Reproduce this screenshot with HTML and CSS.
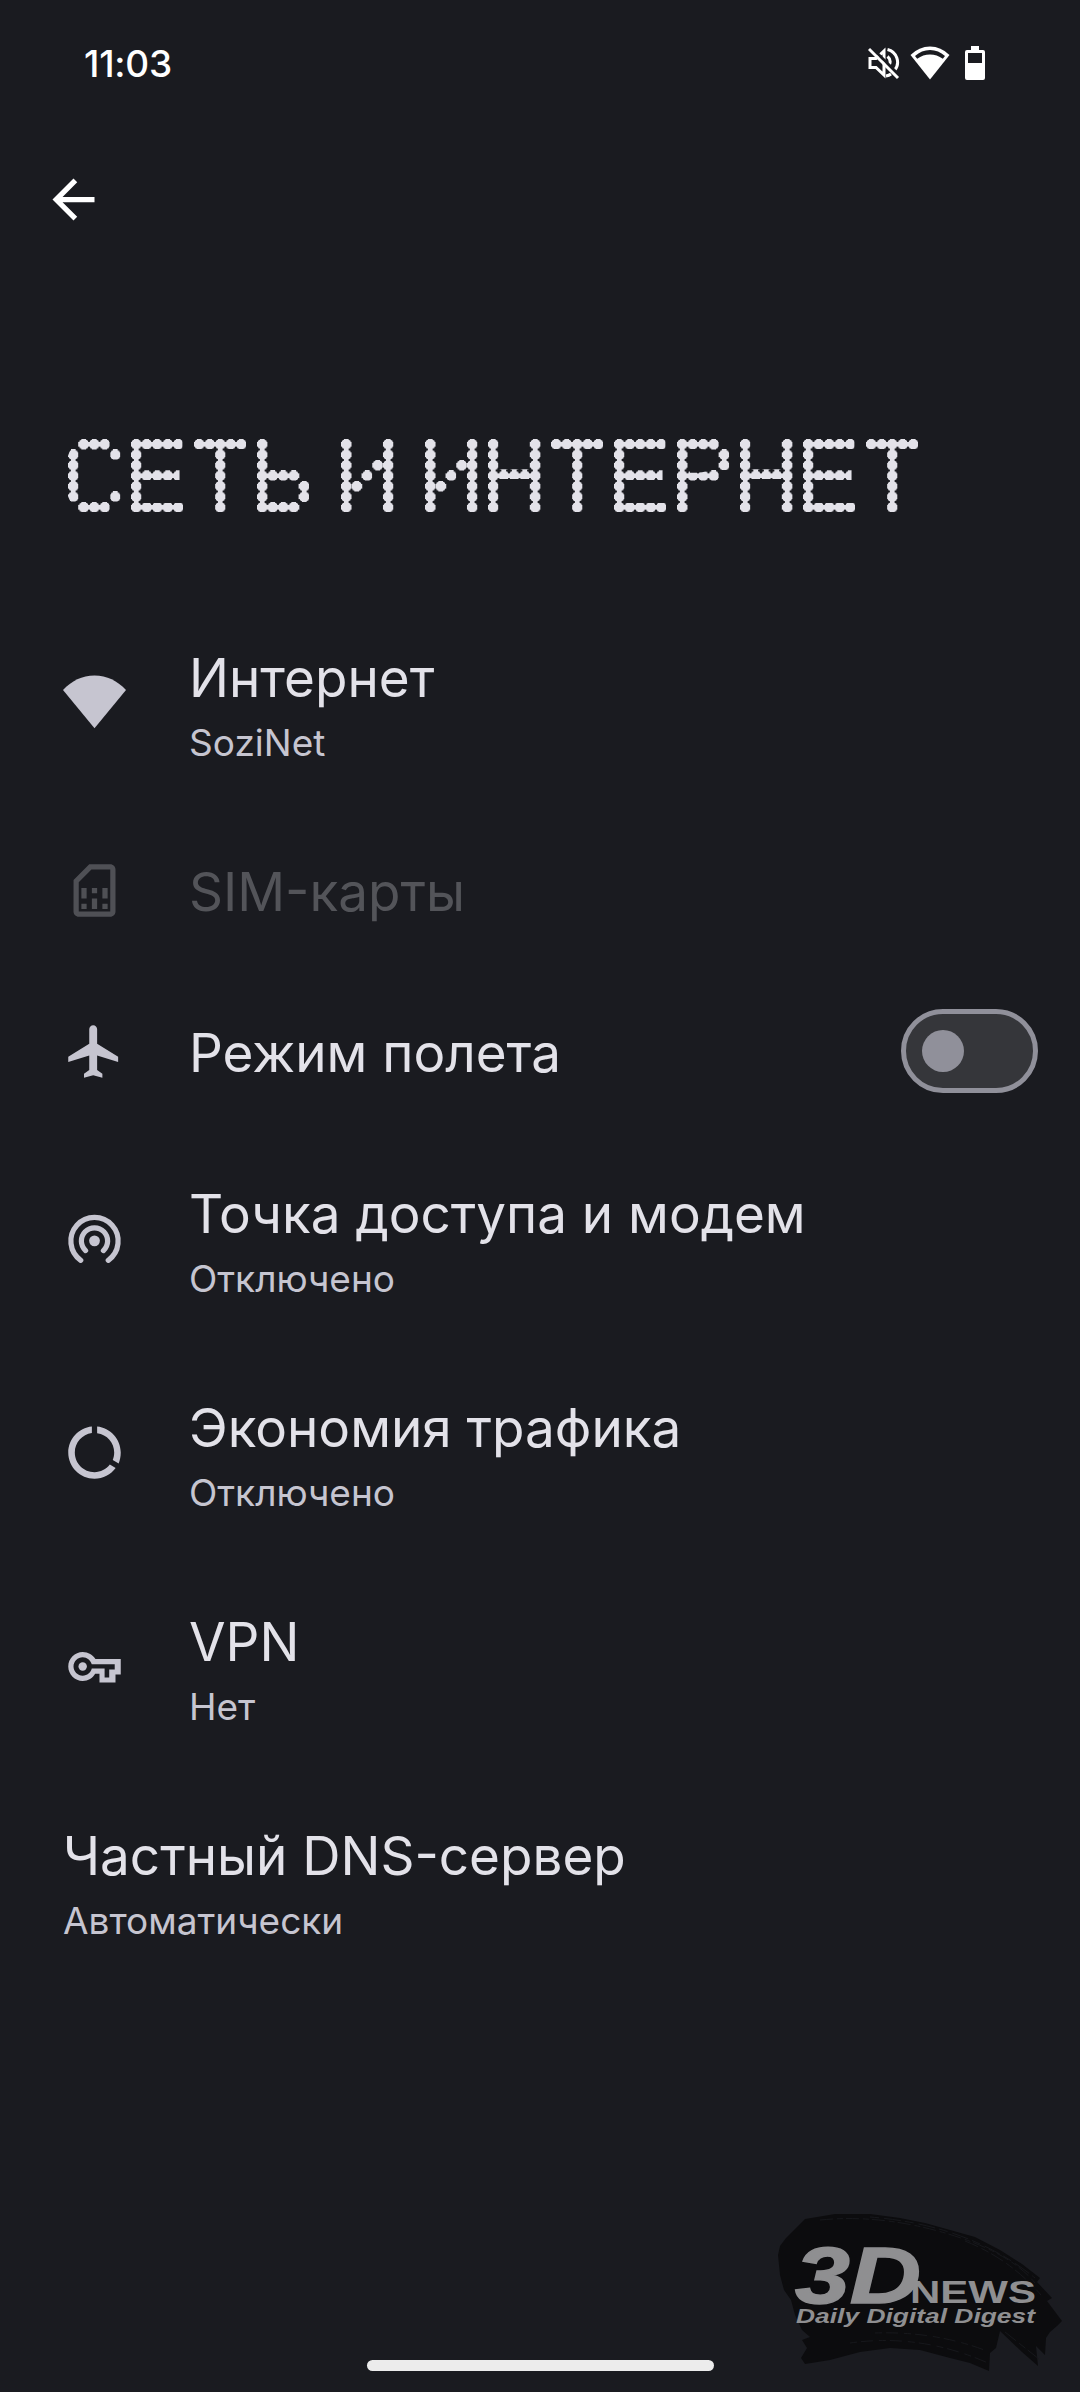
FILE: index.html
```html
<!DOCTYPE html>
<html lang="ru">
<head>
<meta charset="utf-8">
<title>Сеть и интернет</title>
<link rel="stylesheet" href="styles.css">
</head>
<body>
<header class="status-bar">
  <span class="clock">11:03</span>
  <div class="status-icons">
    <svg class="mute" width="32" height="34" viewBox="0 0 32 34" fill="none" stroke="#fff" stroke-width="3">
      <path d="M2 12.500h6l8-7.500v24l-8-7.500H2z"/>
      <path d="M19.500 3.500a13 13 0 0 1 7 21M19.500 10.500a7 7 0 0 1 2 8M18 30q3-.5 5-2"/>
      <path d="M3 1l29 29" stroke="#1a1b20" stroke-width="3"/>
      <path d="M1 3l29 29"/>
    </svg>
    <svg class="wifi" width="40" height="34" viewBox="0 0 40 34">
      <path fill="#fff" d="M20 33.500L.5 9Q9 .5 20 .5T39.500 9z"/>
      <path fill="#1a1b20" d="M5 10Q11.500 4 20 4t15 6l-2.200 2.800Q27 8.500 20 8.500T7.200 12.800z"/>
    </svg>
    <svg class="battery" width="20" height="34" viewBox="0 0 20 34">
      <path fill="#fff" fill-rule="evenodd" d="M6 0h8v4h4a2 2 0 0 1 2 2v26a2 2 0 0 1-2 2H2a2 2 0 0 1-2-2V6a2 2 0 0 1 2-2h4zM3 7v10h14V7z"/>
    </svg>
  </div>
</header>
<nav class="toolbar">
  <svg class="icon back" viewBox="0 0 24 24"><path d="M20 11H7.830l5.590-5.590L12 4l-8 8 8 8 1.410-1.410L7.830 13H20v-2z"/></svg>
</nav>
<h1 class="page-title">
  <span class="word"><span class="cell"><span class="dots es">С</span></span><span class="cell"><span class="dots ie">Е</span></span><span class="cell"><span class="dots te">Т</span></span><span class="cell"><span class="dots soft">Ь</span></span></span>
  <span class="word"><span class="cell"><span class="dots i">И</span></span></span>
  <span class="word"><span class="cell"><span class="dots i">И</span></span><span class="cell"><span class="dots en">Н</span></span><span class="cell"><span class="dots te">Т</span></span><span class="cell"><span class="dots ie">Е</span></span><span class="cell"><span class="dots er">Р</span></span><span class="cell"><span class="dots en">Н</span></span><span class="cell"><span class="dots ie">Е</span></span><span class="cell"><span class="dots te">Т</span></span></span>
</h1>
<main class="settings">
  <section class="row">
    <svg class="icon" viewBox="0 0 24 24"><path d="M12 21.800L0 7.200C3.200 3.800 7.300 1.700 12 1.700s8.800 2.100 12 5.500z"/></svg>
    <div class="label"><div class="name">Интернет</div><div class="summary">SoziNet</div></div>
  </section>
  <section class="row single disabled">
    <svg class="icon" viewBox="0 0 24 24"><path d="M18 2h-8L4.020 8 4 20c0 1.100.9 2 2 2h12c1.100 0 2-.9 2-2V4c0-1.100-.9-2-2-2zm0 18H6V8.830L10.830 4H18v16zM7 17h2v2H7zm8 0h2v2h-2zm-8-6h2v4H7zm4 4h2v4h-2zm0-4h2v2h-2zm4 0h2v4h-2z"/></svg>
    <div class="label"><div class="name">SIM-карты</div></div>
  </section>
  <section class="row single">
    <svg class="icon" viewBox="0 0 24 24"><path d="M21 16v-2l-8-5V3.500c0-.83-.67-1.500-1.500-1.500S10 2.670 10 3.500V9l-8 5v2l8-2.500V19l-2 1.500V22l3.500-1 3.500 1v-1.500L13 19v-5.500l8 2.500z"/></svg>
    <div class="label"><div class="name">Режим полета</div></div>
    <div class="switch"><span class="thumb"></span></div>
  </section>
  <section class="row">
    <svg class="icon line" viewBox="0 0 24 24"><circle class="dot" cx="12" cy="12.900" r="2.050"/><path d="M8.600 16.600a5 5 0 1 1 6.800 0M6.750 20.300a9 9 0 1 1 10.500 0"/></svg>
    <div class="label"><div class="name">Точка доступа и модем</div><div class="summary">Отключено</div></div>
  </section>
  <section class="row">
    <svg class="icon" viewBox="0 0 24 24"><path d="M13 2.050v2.600c3.800.49 6.500 3.600 6.500 7.350 0 1-.2 2-.55 2.900l2.250 1.300c.5-1.300.8-2.700.8-4.200 0-5.180-3.950-9.450-9-9.950zM12 19.500c-4.150 0-7.500-3.350-7.500-7.500 0-3.750 2.800-6.900 6.500-7.400V2.050c-5.060.5-9 4.760-9 9.950 0 5.520 4.470 10 9.990 10 3.310 0 6.240-1.610 8.060-4.090l-2.200-1.300C16.400 18.400 14.350 19.500 12 19.500z"/></svg>
    <div class="label"><div class="name">Экономия трафика</div><div class="summary">Отключено</div></div>
  </section>
  <section class="row">
    <svg class="icon" viewBox="0 0 24 24"><circle cx="7.500" cy="12" r="1.600"/><path fill-rule="evenodd" d="M7.500 6.500c2.100 0 3.900 1.150 4.850 2.650H22v5.900h-2v3.050h-6.100v-3.350h-1.650c-.95 1.600-2.650 2.750-4.750 2.750-3 0-5.500-2.500-5.500-5.500s2.500-5.500 5.500-5.500zm0 2c-1.900 0-3.500 1.600-3.500 3.500s1.600 3.500 3.500 3.500c1.700 0 3.150-1.200 3.450-2.700h4.900v3.400h1.750v-3.100h2.100v-2h-8.750C10.450 9.650 9.200 8.500 7.500 8.500z"/></svg>
    <div class="label"><div class="name">VPN</div><div class="summary">Нет</div></div>
  </section>
  <section class="row">
    <div class="label"><div class="name">Частный DNS-сервер</div><div class="summary">Автоматически</div></div>
  </section>
</main>
<div class="gesture-bar"></div>
<svg class="watermark" width="320" height="202" viewBox="0 0 320 202">
  <path fill="#0c0c0e" d="M45 29L75 24 110 24 140 28 165 33 190 40 215 47 240 60 262 74 280 88 277 92 292 108 287 111 302 131 297 136 290 142 286 148 285 165 276 156 278 176 262 162 240 141 236 158 230 163 229 181 210 173 190 168 160 160 130 158 100 162 70 170 45 174 41 168 47 158 42 150 50 147 42 140 35 125 31 110 24 100 20 85 18 65 20 56 26 48 34 40z"/>
  <g fill="none" stroke="#17181c" stroke-width="1">
    <path stroke-dasharray="13 4 6 3" d="M60 30q60-6 125 13T275 93"/>
    <path stroke-dasharray="9 5 17 4" d="M110 27q100 8 165 61"/>
    <path stroke-dasharray="7 4 12 6" d="M90 153q70-10 138 20M115 143q60-2 112 18"/>
    <path stroke-dasharray="14 4 8 3" d="M205 51q45 18 76 54M245 142l34 27"/>
  </g>
  <g fill="#8f8f91" font-family="'Liberation Sans', sans-serif" font-weight="700">
    <text x="35" y="112.500" font-size="80" font-style="italic" stroke="#8f8f91" stroke-width="1.500" textLength="126" lengthAdjust="spacingAndGlyphs">3D</text>
    <text x="150" y="113" font-size="32" textLength="126" lengthAdjust="spacingAndGlyphs">NEWS</text>
    <text x="36" y="133" font-size="20.500" font-style="italic" textLength="239" lengthAdjust="spacingAndGlyphs">Daily Digital Digest</text>
  </g>
</svg>
</body>
</html>
```
FILE: styles.css
```css
* { box-sizing: border-box; }

body {
  margin: 0;
  height: 2392px;
  display: flex;
  flex-direction: column;
  position: relative;
  overflow: hidden;
  background: #1a1b20;
  color: #e3e2e9;
  font-family: Inter, "Noto Sans", sans-serif;
}

.status-bar {
  height: 126px;
  padding: 0 95px 0 84px;
  display: flex;
  justify-content: space-between;
}

.clock {
  line-height: 127px;
  font-size: 37px;
  font-weight: 500;
  letter-spacing: -0.2px;
  color: #fff;
}

.status-icons {
  display: flex;
  padding-top: 46px;
}

.wifi { margin-left: 10px; }
.battery { margin-left: 15px; }

.toolbar {
  height: 312px;
  padding: 42px 42px 0;
}

.icon {
  width: 63px;
  height: 63px;
  flex: none;
  display: block;
  fill: #c6c5d0;
}

.back { fill: #fff; }

.line path {
  fill: none;
  stroke: #c6c5d0;
  stroke-width: 2;
  stroke-linecap: round;
}

/* Dot-matrix heading: every letter fills a 5x7 grid of 10.5px dots */
.page-title {
  margin: 0;
  height: 157px;
  padding: 0.750px 0 0 68px;
  display: flex;
  gap: 21px;
  font-weight: 400;
}

.word { display: flex; }

.cell {
  width: 63px;
  flex: none;
}

/* --s: horizontal stretch of the glyph, --l: its left side bearing */
.dots {
  --on: linear-gradient(#000 0 0);
  display: block;
  width: calc(52.5px / var(--s));
  height: 73.5px;
  font: 400 104.530px/74.560px "Liberation Sans", sans-serif;
  text-indent: calc(-1 * var(--l));
  transform: scaleX(var(--s));
  transform-origin: 0 0;
  color: transparent;
  -webkit-text-stroke: 2px transparent;
  background-image: radial-gradient(closest-side, #e3e2e9 98%, transparent 106%);
  background-size: calc(10.5px / var(--s)) 10.5px;
  -webkit-background-clip: text;
  background-clip: text;
}

/* Curved and diagonal letters snap to whole grid cells */
.es {
  --s: 0.784;
  --l: 4.910px;
  -webkit-text-stroke-width: 9px;
  mask:
    var(--on) 0 10.5px / 20% 52.5px no-repeat,
    var(--on) 50% 0 / 60% 10.5px no-repeat,
    var(--on) 50% 100% / 60% 10.5px no-repeat,
    var(--on) 100% 10.5px / 20% 10.5px no-repeat,
    var(--on) 100% 52.5px / 20% 10.5px no-repeat;
}

.ie { --s: 0.918; --l: 8.150px; }
.te { --s: 0.869; --l: 1.670px; }

.soft {
  --s: 0.945;
  --l: 8.150px;
  -webkit-text-stroke-width: 7px;
  mask:
    var(--on) 0 0 / 20% 100% no-repeat,
    var(--on) 0 31.5px / 80% 10.5px no-repeat,
    var(--on) 100% 42px / 20% 21px no-repeat,
    var(--on) 0 100% / 80% 10.5px no-repeat;
}

.i {
  --s: 0.893;
  --l: 8.150px;
  -webkit-text-stroke-width: 12px;
  mask:
    var(--on) 0 0 / 20% 100% no-repeat,
    var(--on) 25% 42px / 20% 10.5px no-repeat,
    var(--on) 50% 31.5px / 20% 10.5px no-repeat,
    var(--on) 75% 21px / 20% 10.5px no-repeat,
    var(--on) 100% 0 / 20% 100% no-repeat;
}

.en { --s: 0.913; --l: 8px; font: 400 102.260px/76.500px Roboto, sans-serif; }

.er {
  --s: 1.095;
  --l: 9.600px;
  font: 400 102.260px/67.600px "Open Sans", sans-serif;
  -webkit-text-stroke-width: 6px;
  mask:
    var(--on) 0 0 / 20% 100% no-repeat,
    var(--on) 0 0 / 80% 10.5px no-repeat,
    var(--on) 100% 10.5px / 20% 21px no-repeat,
    var(--on) 0 31.5px / 80% 10.5px no-repeat;
}

.row {
  height: 214px;
  padding: 0 42px 0 63px;
  display: flex;
  align-items: center;
  gap: 63px;
}

.single { height: 161px; }
.label { flex: 1; }
.row .icon { margin-top: 1px; }

.name {
  padding-top: 2px;
  font-size: 53px;
  line-height: 79px;
  white-space: nowrap;
}

.single .name { padding-top: 5px; }

.summary {
  font-size: 37px;
  line-height: 50px;
  color: #c6c5d0;
}

.disabled .name { color: #535459; }
.disabled .icon { fill: #4f5055; }

.switch {
  width: 137px;
  height: 84px;
  padding-left: 16px;
  display: flex;
  align-items: center;
  border: 5px solid #90909a;
  border-radius: 42px;
  background: #35363a;
}

.thumb {
  width: 42px;
  height: 42px;
  border-radius: 50%;
  background: #90909a;
}

.gesture-bar {
  width: 347px;
  height: 11px;
  margin: auto auto 21px;
  border-radius: 6px;
  background: #ececec;
}

.watermark {
  position: absolute;
  left: 760px;
  top: 2190px;
}
```
